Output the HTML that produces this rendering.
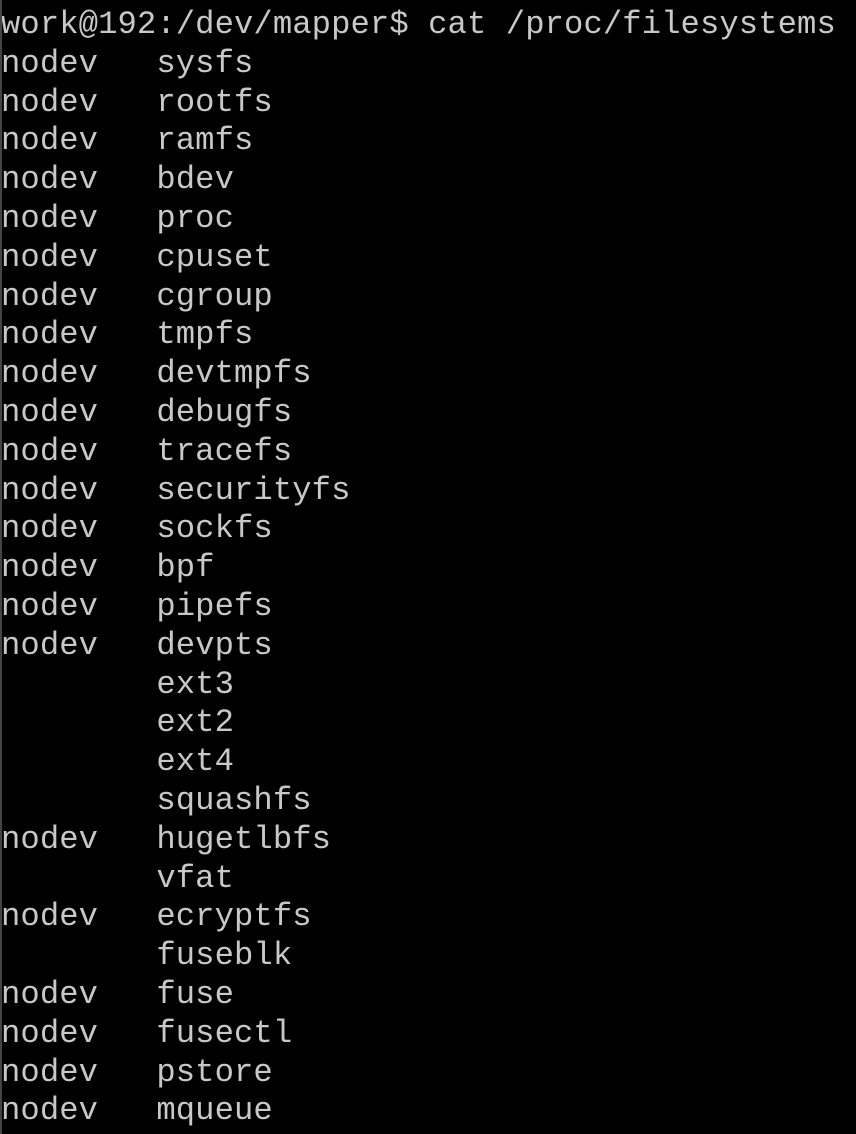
<!DOCTYPE html>
<html><head><meta charset="utf-8"><style>
html,body{margin:0;padding:0;background:#000;}
body{width:856px;height:1134px;overflow:hidden;position:relative;}
pre{margin:0;padding:6px 0 0 1px;font-family:"Liberation Mono","DejaVu Sans Mono",monospace;font-size:32.2px;line-height:38.8px;color:#c8c8c8;letter-spacing:0.1px;}
.bar{position:absolute;left:0;top:0;width:2px;height:1134px;background:#444;}
</style></head><body><div class="bar"></div><pre>work@192:/dev/mapper$ cat /proc/filesystems
nodev   sysfs
nodev   rootfs
nodev   ramfs
nodev   bdev
nodev   proc
nodev   cpuset
nodev   cgroup
nodev   tmpfs
nodev   devtmpfs
nodev   debugfs
nodev   tracefs
nodev   securityfs
nodev   sockfs
nodev   bpf
nodev   pipefs
nodev   devpts
        ext3
        ext2
        ext4
        squashfs
nodev   hugetlbfs
        vfat
nodev   ecryptfs
        fuseblk
nodev   fuse
nodev   fusectl
nodev   pstore
nodev   mqueue</pre></body></html>
